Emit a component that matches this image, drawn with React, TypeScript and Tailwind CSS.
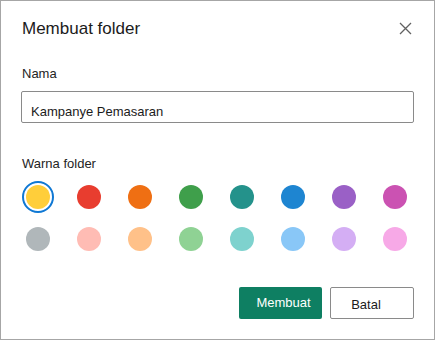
import * as React from 'react';

const topRow = ['#ffce3a', '#e83d2f', '#ef6f13', '#3f9f4b', '#24928b', '#1e85d1', '#9a60c6', '#cb52b2'];
const bottomRow = ['#b0b7ba', '#ffbcb4', '#ffc189', '#8fd294', '#7ed2ce', '#89c7f7', '#d4aef4', '#f7a9e7'];

export default function App() {
    const [selected, setSelected] = React.useState('#ffce3a');
    const [name, setName] = React.useState('Kampanye Pemasaran');

    const swatch = (color: string) => (
        <button
            key={color}
            onClick={() => setSelected(color)}
            className={`w-[32px] h-[32px] rounded-full flex items-center justify-center ${selected === color ? 'border-[2.5px] border-[#0f78d4]' : ''}`}
        >
            <span className="block w-[24px] h-[24px] rounded-full" style={{ backgroundColor: color }} />
        </button>
    );

    return (
        <div
            className="w-[435px] h-[340px] bg-white border border-[#a6a6a6] flex flex-col px-[20px]"
            style={{ fontFamily: '"Liberation Sans", Arial, sans-serif' }}
        >
            {/* Header */}
            <div className="flex items-start justify-between pt-[16px]">
                <h1 className="text-[17px] leading-[24px] text-[#1b1b1b] pl-[1px]">Membuat folder</h1>
                <button className="mt-[5px] mr-[2px] text-[#616161]">
                    <svg width="13" height="13" viewBox="0 0 13 13" fill="none" stroke="currentColor" strokeWidth="1.3">
                        <path d="M1 1L12 12M12 1L1 12" />
                    </svg>
                </button>
            </div>

            {/* Nama */}
            <label className="mt-[23px] text-[13px] leading-[20px] text-[#242424] pl-[1px]">Nama</label>
            <input
                value={name}
                onChange={(e) => setName(e.target.value)}
                className="mt-[7px] h-[32px] w-full border border-[#8a8a8a] rounded-[2px] pl-[9px] pt-[8px] text-[13px] text-[#1b1b1b] outline-none"
                style={{ fontFamily: '"Liberation Sans", Arial, sans-serif' }}
            />

            {/* Warna */}
            <p className="mt-[31px] text-[13px] leading-[20px] text-[#242424] pl-[1px]">Warna folder</p>
            <div className="mt-[7px] ml-[1px] grid grid-cols-[repeat(8,32px)] gap-x-[19px] gap-y-[10px]">
                {topRow.map(swatch)}
                {bottomRow.map(swatch)}
            </div>

            {/* Actions */}
            <div className="mt-[32px] flex justify-end gap-[8px]">
                <button className="w-[83px] h-[32px] rounded-[2px] bg-[#0e7f62] text-white text-[13px] pl-[6px]">
                    Membuat
                </button>
                <button className="w-[84px] h-[32px] rounded-[2px] border border-[#8a8a8a] bg-white text-[#1b1b1b] text-[13px] pr-[12px] pt-[4px]">
                    Batal
                </button>
            </div>
        </div>
    );
}
